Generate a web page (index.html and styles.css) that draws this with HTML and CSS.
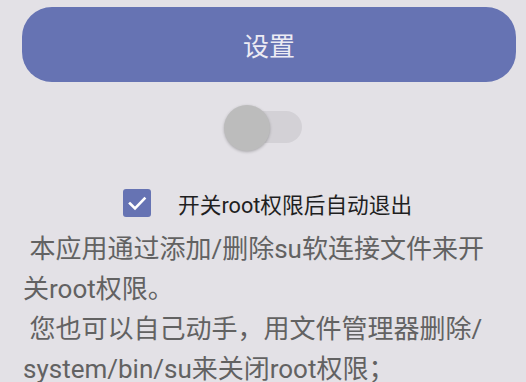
FILE: index.html
```html
<!DOCTYPE html>
<html lang="zh-CN">
<head>
<meta charset="utf-8">
<title>设置</title>
<link rel="stylesheet" href="styles.css">
</head>
<body>
<div class="page">
  <button class="main-btn">设置</button>
  <div class="switch-row">
    <div class="switch">
      <div class="track"></div>
      <div class="thumb"></div>
    </div>
  </div>
  <label class="check-row">
    <span class="checkbox">
      <svg viewBox="0 0 28 28" width="28" height="28"><path d="M7 14.5 L12 19.5 L21.5 9.5" fill="none" stroke="#ffffff" stroke-width="2.6" stroke-linecap="square"/></svg>
    </span>
    <span class="check-label">开关root权限后自动退出</span>
  </label>
  <p class="desc"> 本应用通过添加/删除su软连接文件来开关root权限。<br> 您也可以自己动手，用文件管理器删除/<wbr>system/bin/su来关闭root权限；</p>
</div>
</body>
</html>
```

FILE: styles.css
```css
html, body {
  margin: 0;
  padding: 0;
  background: #e3e1e6;
  overflow: hidden;
}
.page {
  padding-top: 7px;
  font-family: "Roboto", "Noto Sans CJK SC", sans-serif;
}
.main-btn {
  display: flex;
  align-items: center;
  justify-content: center;
  margin: 0 10px 0 22px;
  width: calc(100% - 32px);
  height: 75px;
  border: none;
  border-radius: 30px;
  background: #6673b3;
  color: #ecebf3;
  font-family: "Roboto", "Noto Sans CJK SC", sans-serif;
  font-size: 26px;
  padding: 0;
}
.switch-row {
  display: flex;
  justify-content: center;
  margin-top: 21px;
  padding-right: 2px;
}
.switch {
  position: relative;
  width: 80px;
  height: 50px;
}
.track {
  position: absolute;
  left: 16px;
  right: 0;
  top: 8px;
  height: 32px;
  border-radius: 16px;
  background: #d3d1d6;
}
.thumb {
  position: absolute;
  left: 2px;
  top: 2px;
  width: 46px;
  height: 46px;
  border-radius: 50%;
  background: #bcbcbc;
  box-shadow: 0 1px 3px rgba(0,0,0,0.25);
}
.check-row {
  display: flex;
  align-items: center;
  margin-top: 36px;
  padding-left: 123px;
  height: 28px;
}
.checkbox {
  display: block;
  width: 28px;
  height: 28px;
  border-radius: 3px;
  background: #6673b3;
}
.checkbox svg { display: block; }
.check-label {
  margin-left: 27px;
  font-family: "Roboto", "Noto Sans CJK SC", sans-serif;
  font-size: 21.7px;
  color: #1f1f1f;
  white-space: pre;
}
.desc {
  margin: 12px 0 0 0;
  padding: 0 20px 0 23px;
  font-size: 26px;
  line-height: 40px;
  color: #626262;
  white-space: pre-wrap;
}
```
